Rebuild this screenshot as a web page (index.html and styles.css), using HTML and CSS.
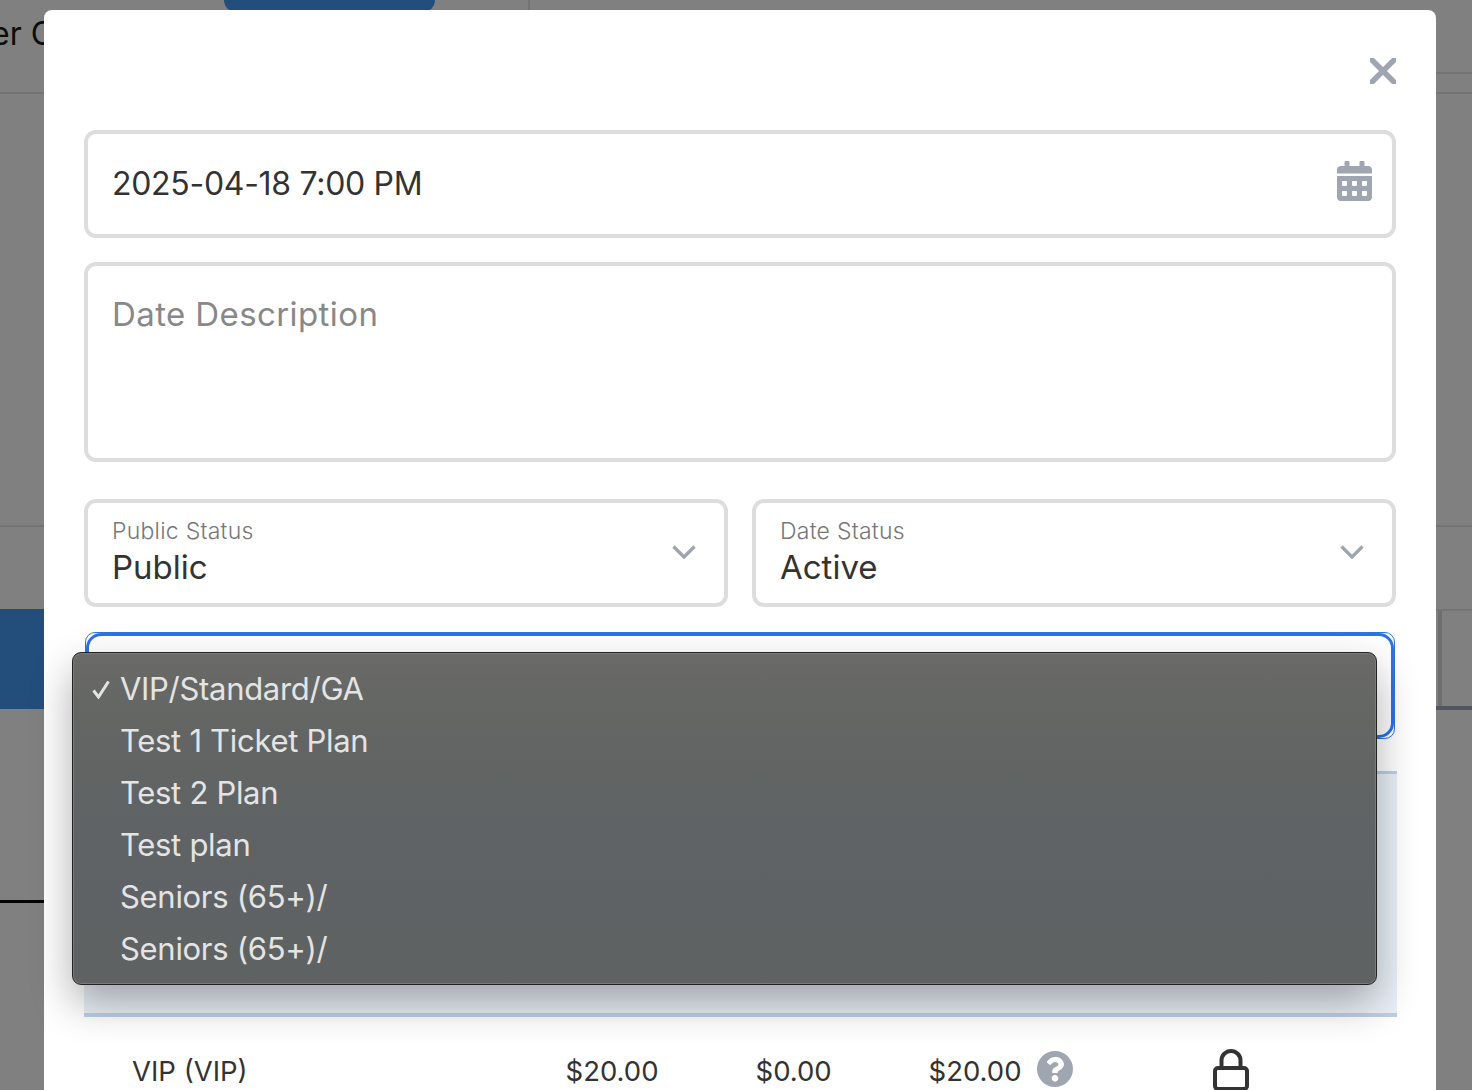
FILE: index.html
```html
<!DOCTYPE html>
<html lang="en">
<head>
<meta charset="utf-8">
<title>Edit date</title>
<link rel="stylesheet" href="styles.css">
</head>
<body>
<div class="backdrop">
  <header class="topbar">
    <div class="page-title"><span>er C</span></div>
    <div class="top-button"></div>
    <div class="top-divider"></div>
    <div class="top-rule"></div>
  </header>
  <section class="band-a"></section>
  <section class="band-b">
    <div class="blue-block"></div>
    <div class="side-cell"></div>
  </section>
  <section class="band-c"><div class="black-rule"></div></section>
</div>

<div class="modal">
  <div class="close-row">
    <svg class="close-icon" viewBox="0 0 26 26"><path d="M2 2 24 24M24 2 2 24"/></svg>
  </div>

  <div class="field date-field">
    <span class="date-value">2025-04-18 7:00 PM</span>
    <svg class="calendar-icon" viewBox="0 0 448 512"><path d="M0 464c0 26.5 21.5 48 48 48h352c26.5 0 48-21.5 48-48V192H0v272zm320-196c0-6.6 5.4-12 12-12h40c6.6 0 12 5.4 12 12v40c0 6.6-5.4 12-12 12h-40c-6.6 0-12-5.4-12-12v-40zm0 128c0-6.6 5.4-12 12-12h40c6.6 0 12 5.4 12 12v40c0 6.6-5.4 12-12 12h-40c-6.6 0-12-5.4-12-12v-40zM192 268c0-6.6 5.4-12 12-12h40c6.6 0 12 5.4 12 12v40c0 6.6-5.4 12-12 12h-40c-6.6 0-12-5.4-12-12v-40zm0 128c0-6.6 5.4-12 12-12h40c6.6 0 12 5.4 12 12v40c0 6.6-5.4 12-12 12h-40c-6.6 0-12-5.4-12-12v-40zM64 268c0-6.6 5.4-12 12-12h40c6.6 0 12 5.4 12 12v40c0 6.6-5.4 12-12 12H76c-6.6 0-12-5.4-12-12v-40zm0 128c0-6.6 5.4-12 12-12h40c6.6 0 12 5.4 12 12v40c0 6.6-5.4 12-12 12H76c-6.6 0-12-5.4-12-12v-40zM400 64h-48V16c0-8.8-7.2-16-16-16h-32c-8.8 0-16 7.2-16 16v48H160V16c0-8.8-7.2-16-16-16h-32c-8.8 0-16 7.2-16 16v48H48C21.5 64 0 85.5 0 112v48h448v-48c0-26.5-21.5-48-48-48z"/></svg>
  </div>

  <div class="field description-field">
    <span class="placeholder">Date Description</span>
  </div>

  <div class="select-row">
    <div class="field select-field">
      <div class="select-text">
        <span class="select-label">Public Status</span>
        <span class="select-value">Public</span>
      </div>
      <svg class="chevron" viewBox="0 0 24 14"><path d="M1.5 1.5 12 12 22.5 1.5"/></svg>
    </div>
    <div class="field select-field">
      <div class="select-text">
        <span class="select-label">Date Status</span>
        <span class="select-value">Active</span>
      </div>
      <svg class="chevron" viewBox="0 0 24 14"><path d="M1.5 1.5 12 12 22.5 1.5"/></svg>
    </div>
  </div>

  <div class="focus-ring"><div class="focus-select"></div></div>

  <div class="table-head"></div>

  <div class="table-row">
    <span>VIP (VIP)</span>
    <span>$20.00</span>
    <span>$0.00</span>
    <span class="total-cell">$20.00
      <svg class="help-icon" viewBox="8 8 496 496"><path d="M504 256c0 136.997-111.043 248-248 248S8 392.997 8 256C8 119.083 119.043 8 256 8s248 111.083 248 248zM262.655 90c-54.497 0-89.255 22.957-116.549 63.758-3.536 5.286-2.353 12.415 2.715 16.258l34.699 26.31c5.205 3.947 12.621 3.008 16.665-2.122 17.864-22.658 30.113-35.797 57.303-35.797 20.429 0 45.698 13.148 45.698 32.958 0 14.976-12.363 22.667-32.534 33.976C247.128 238.528 216 254.941 216 296v4c0 6.627 5.373 12 12 12h56c6.627 0 12-5.373 12-12v-1.333c0-28.462 83.186-29.647 83.186-106.667 0-58.002-60.165-106-116.531-106zM256 338c-25.365 0-46 20.635-46 46 0 25.364 20.635 46 46 46s46-20.636 46-46c0-25.365-20.635-46-46-46z"/></svg>
    </span>
    <svg class="lock-icon" viewBox="0 0 36 42"><path d="M8.500 19V11.500a9.500 9.500 0 0 1 19 0V19"/><rect x="2" y="19" width="32" height="21" rx="3"/></svg>
  </div>

  <ul class="popup-menu">
    <li class="popup-item">
      <svg class="check-icon" viewBox="0 0 18 19"><path d="M1.500 10.500 6.500 17 16.500 1.500"/></svg>
      VIP/Standard/GA
    </li>
    <li class="popup-item">Test 1 Ticket Plan</li>
    <li class="popup-item">Test 2 Plan</li>
    <li class="popup-item">Test plan</li>
    <li class="popup-item">Seniors (65+)/</li>
    <li class="popup-item">Seniors (65+)/</li>
  </ul>
</div>
</body>
</html>
```

FILE: styles.css
```css
* { box-sizing: border-box; }

html, body {
  margin: 0;
  height: 1090px;
  overflow: hidden;
}

body {
  position: relative;
  background: #808080;
  font-family: Inter, "Liberation Sans", sans-serif;
  color: #333;
}

/* dimmed page behind the dialog */
.backdrop { height: 1090px; }

.topbar {
  display: flex;
  align-items: flex-start;
  height: 94px;
  border-bottom: 2px solid #737373;
}

.page-title {
  width: 224px;
  height: 66px;
  overflow: hidden;
  display: flex;
  align-items: flex-end;
  font-size: 32px;
  color: #0c0c0c;
  line-height: 42px;
}

.page-title span {
  margin-left: -9px;
  margin-bottom: 11px;
  white-space: nowrap;
}

.top-button {
  width: 211px;
  height: 24px;
  margin-top: -12px;
  background: #234e7c;
  border-radius: 12px;
}

.top-divider {
  width: 2px;
  height: 73px;
  margin-left: 93px;
  background: #737373;
}

.top-rule {
  width: 60px;
  height: 74px;
  margin-left: auto;
  border-bottom: 2px solid #737373;
}

.band-a {
  height: 433px;
  border-bottom: 2px solid #737373;
}

.band-b {
  display: flex;
  justify-content: space-between;
  margin-top: 82px;
  height: 101px;
}

.blue-block {
  width: 60px;
  height: 100px;
  background: #234e7c;
}

.side-cell {
  width: 40px;
  height: 101px;
  border-top: 2px solid #737373;
  border-bottom: 4px solid #50555e;
  background: linear-gradient(#6e6e72, #6e6e72) 6px 0 / 4px 100% no-repeat;
}

.band-c { padding-top: 190px; }

.black-rule {
  width: 60px;
  height: 3px;
  background: #050505;
}

/* dialog */
.modal {
  position: absolute;
  left: 44px;
  top: 10px;
  width: 1392px;
  height: 1200px;
  padding: 40px;
  background: #fff;
  border-radius: 8px;
}

.close-row {
  display: flex;
  justify-content: flex-end;
  height: 80px;
  padding-top: 8px;
}

.close-icon {
  width: 26px;
  height: 26px;
  fill: none;
  stroke: #a0a5b2;
  stroke-width: 5.5;
  stroke-linecap: square;
}

.field {
  border: 4px solid #ddd;
  border-radius: 12px;
  background: #fff;
}

.date-field {
  display: flex;
  align-items: center;
  justify-content: space-between;
  height: 108px;
  padding: 0 20px 0 24px;
}

.date-value {
  margin-top: -2px;
  font-size: 32px;
  letter-spacing: -0.3px;
  color: #333;
}

.calendar-icon {
  width: 35px;
  height: 40px;
  margin-top: -6px;
  fill: #a0a5b2;
}

.description-field {
  height: 200px;
  margin-top: 24px;
  padding: 28px 24px;
}

.placeholder {
  font-size: 33px;
  line-height: 40px;
  letter-spacing: 0.4px;
  color: #888;
}

.select-row {
  display: grid;
  grid-template-columns: 1fr 1fr;
  gap: 24px;
  margin-top: 37px;
}

.select-field {
  display: flex;
  align-items: center;
  justify-content: space-between;
  height: 108px;
  padding: 0 28px 0 24px;
}

.select-text {
  display: flex;
  flex-direction: column;
  margin-top: -3px;
}

.select-label {
  font-size: 23px;
  line-height: 30px;
  letter-spacing: 0.25px;
  font-weight: 300;
  color: #777;
}

.select-value {
  margin-top: 1px;
  font-size: 33px;
  line-height: 40px;
  color: #333;
}

.chevron {
  width: 24px;
  height: 14px;
  margin-top: -2px;
  fill: none;
  stroke: #a0a5b2;
  stroke-width: 3.4;
}

.focus-ring {
  height: 107px;
  margin: 25px 1px 0;
  border: 1px solid #2f72e2;
  border-radius: 10px;
}

.focus-select {
  height: 100%;
  border: 3px solid #2f72e2;
  border-radius: 15px;
}

.table-head {
  height: 246px;
  margin: 32px -1px 0 0;
  background: #ebf0f8;
  border-top: 3px solid #bdd0e8;
  border-bottom: 4px solid #bdd0e8;
}

.table-row {
  display: grid;
  grid-template-columns: 433.500px 190px 173px 284.500px 36px;
  align-items: center;
  height: 108px;
  padding-left: 48px;
  font-size: 27.500px;
  color: #333;
}

.total-cell {
  display: flex;
  align-items: center;
  gap: 15px;
}

.help-icon {
  width: 36px;
  height: 36px;
  margin-top: -4px;
  fill: #a0a5b2;
}

.lock-icon {
  width: 36px;
  height: 42px;
  margin-top: -2px;
  fill: none;
  stroke: #333;
  stroke-width: 4;
}

/* native select popup */
.popup-menu {
  position: absolute;
  left: 28px;
  top: 642px;
  width: 1305px;
  height: 333px;
  margin: 0;
  padding: 10px 0;
  list-style: none;
  background: linear-gradient(180deg, #6a6a67 0%, #626563 25%, #5f6365 55%, #5e6263 100%);
  border: 1px solid #222;
  border-radius: 9px;
  box-shadow: inset 0 0 0 1px #7c7c7a, 0 18px 42px rgba(0, 0, 0, 0.32);
}

.popup-item {
  position: relative;
  height: 52px;
  padding-left: 47px;
  font-size: 31px;
  letter-spacing: -0.3px;
  line-height: 51px;
  color: #e4e4e4;
  white-space: nowrap;
}

.check-icon {
  position: absolute;
  left: 19px;
  top: 17px;
  width: 18px;
  height: 19px;
  fill: none;
  stroke: #e4e4e4;
  stroke-width: 3;
}
```
